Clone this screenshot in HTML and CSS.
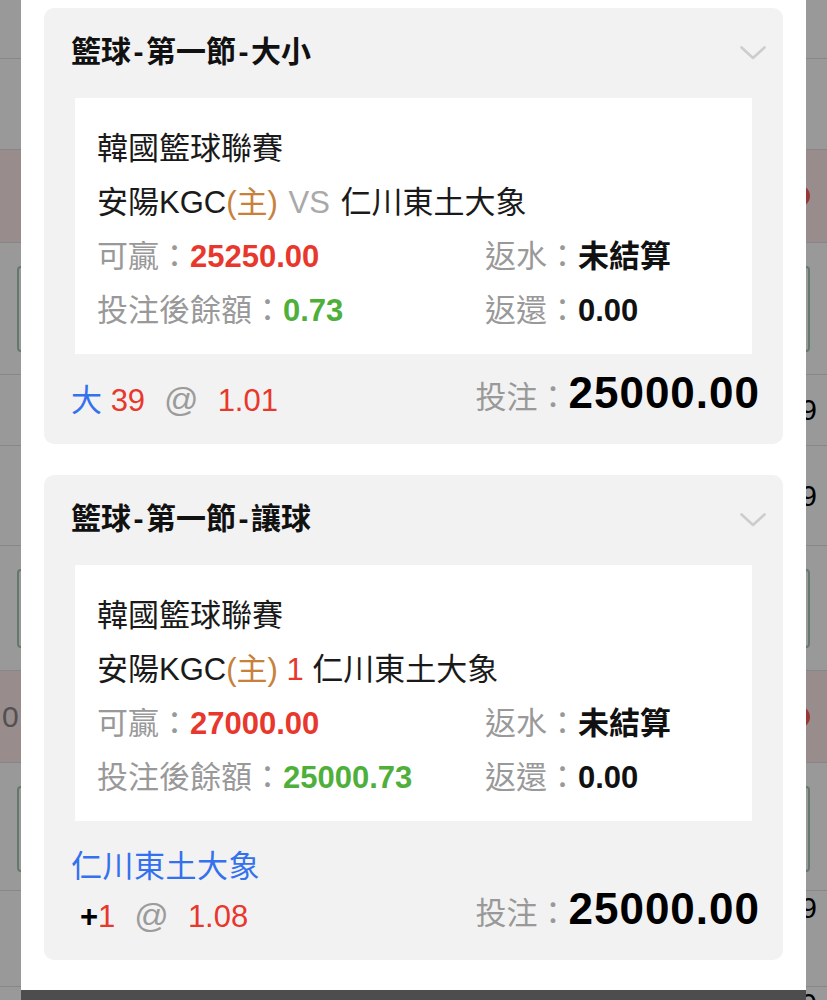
FILE: index.html
```html
<!DOCTYPE html>
<html lang="zh-Hant">
<head>
<meta charset="utf-8">
<title>注單</title>
<link rel="stylesheet" href="styles.css">
</head>
<body>
<div class="page">
  <div class="row h59"></div>
  <div class="row h91"></div>
  <div class="row h93 pink"><span></span><i class="dot"></i></div>
  <div class="row boxed h132"><div class="gbox tall"></div></div>
  <div class="row h71"><span></span><span class="num">9</span></div>
  <div class="row h100"><span></span><span class="num">9</span></div>
  <div class="row boxed h125"><div class="gbox short"></div></div>
  <div class="row h92 pink"><span class="zero">0</span><i class="dot"></i></div>
  <div class="row boxed h128"><div class="gbox tall"></div></div>
  <div class="row top h96"><span></span><span class="num">9</span></div>
  <div class="row top h60"><span></span><span class="num">9</span></div>
</div>

<div class="overlay"></div>

<div class="modal">
  <div class="modal-body">
    <section class="card">
      <header class="card-head">
        <h2>籃球<span class="dash">-</span>第一節<span class="dash">-</span>大小</h2>
        <svg class="chev" width="26" height="14" viewBox="0 0 26 14"><polyline points="1.5,1.5 13,12 24.5,1.5" fill="none" stroke="#cdcdcd" stroke-width="2.6" stroke-linecap="round" stroke-linejoin="round"/></svg>
      </header>
      <div class="detail">
        <div class="line">韓國籃球聯賽</div>
        <div class="line">安陽KGC<span class="home">(主)</span> <span class="vs">VS</span> 仁川東土大象</div>
        <div class="stats">
          <div><span class="lbl">可贏：</span><b class="red">25250.00</b></div>
          <div><span class="lbl">返水：</span><b>未結算</b></div>
          <div><span class="lbl">投注後餘額：</span><b class="green">0.73</b></div>
          <div><span class="lbl">返還：</span><b>0.00</b></div>
        </div>
      </div>
      <div class="card-foot">
        <div class="pick">
          <div class="pick-line"><span class="blue">大</span> <span class="red">39</span><span class="at">@</span><span class="red">1.01</span></div>
        </div>
        <div class="stake"><span class="lbl">投注：</span><b>25000.00</b></div>
      </div>
    </section>

    <section class="card">
      <header class="card-head">
        <h2>籃球<span class="dash">-</span>第一節<span class="dash">-</span>讓球</h2>
        <svg class="chev" width="26" height="14" viewBox="0 0 26 14"><polyline points="1.5,1.5 13,12 24.5,1.5" fill="none" stroke="#cdcdcd" stroke-width="2.6" stroke-linecap="round" stroke-linejoin="round"/></svg>
      </header>
      <div class="detail">
        <div class="line">韓國籃球聯賽</div>
        <div class="line">安陽KGC<span class="home">(主)</span> <span class="red">1</span> 仁川東土大象</div>
        <div class="stats">
          <div><span class="lbl">可贏：</span><b class="red">27000.00</b></div>
          <div><span class="lbl">返水：</span><b>未結算</b></div>
          <div><span class="lbl">投注後餘額：</span><b class="green">25000.73</b></div>
          <div><span class="lbl">返還：</span><b>0.00</b></div>
        </div>
      </div>
      <div class="card-foot">
        <div class="pick">
          <div class="pick-line team">仁川東土大象</div>
          <div class="pick-line"><b class="plus">+</b><span class="red">1</span><span class="at">@</span><span class="red">1.08</span></div>
        </div>
        <div class="stake"><span class="lbl">投注：</span><b>25000.00</b></div>
      </div>
    </section>
  </div>
  <div class="modal-bar"></div>
</div>
</body>
</html>
```

FILE: styles.css
```css
* { box-sizing: border-box; }

html, body {
  margin: 0;
  padding: 0;
  height: 1000px;
  overflow: hidden;
}

body {
  position: relative;
  width: 827px;
  background: #fff;
  color: #111;
  font-family: "Liberation Sans", "Noto Sans CJK TC", sans-serif;
}

/* ---------- underlying page ---------- */
.page { width: 827px; }

.row {
  display: flex;
  align-items: center;
  justify-content: space-between;
  border-bottom: 1px solid #e2e2e2;
  padding: 0 10px 0 2px;
  font-size: 30px;
  color: #000;
}
.row.top { align-items: flex-start; line-height: 34px; }
.row.pink { background: #ffe9e9; }
.row.boxed { display: block; padding: 23px 0 0 17px; }

.h59 { height: 59px; }
.h91 { height: 91px; }
.h93 { height: 93px; }
.h132 { height: 132px; }
.h71 { height: 71px; }
.h100 { height: 100px; }
.h125 { height: 125px; }
.h92 { height: 92px; }
.h128 { height: 128px; }
.h96 { height: 96px; }
.h60 { height: 60px; }

.gbox {
  width: 793px;
  border: 2px solid #a6cbb3;
  border-radius: 4px;
}
.gbox.tall { height: 86px; }
.gbox.short { height: 79px; }

.dot {
  width: 22px;
  height: 22px;
  border-radius: 50%;
  background: #ff5c5c;
  margin-right: 7px;
}
.zero { color: #888; }

.overlay {
  position: fixed;
  inset: 0;
  background: rgba(0, 0, 0, 0.4);
}

/* ---------- modal ---------- */
.modal {
  position: absolute;
  top: 0;
  left: 21px;
  width: 785px;
  background: #fff;
}

.modal-body {
  padding: 8px 23px 30px;
  display: flex;
  flex-direction: column;
  gap: 31px;
}

.modal-bar {
  height: 60px;
  background: #4d4d4d;
}

.card {
  background: #f2f2f2;
  border-radius: 10px;
}

.card-head {
  height: 90px;
  display: flex;
  align-items: center;
  justify-content: space-between;
  padding: 0 17px 0 27px;
}

.card-head h2 {
  margin: 0 0 2px;
  font-size: 30px;
  line-height: 30px;
  font-weight: bold;
  color: #111;
}
.dash { padding: 0 2.5px; }

.chev { display: block; }

.detail {
  margin: 0 31px;
  background: #fff;
  padding: 24px 22px 16px;
  font-size: 31px;
  line-height: 54px;
  color: #1a1a1a;
}

.line { height: 54px; white-space: nowrap; }

.home { color: #c8813b; }
.vs { color: #a9a9a9; margin: 0 2px; }

.stats {
  display: grid;
  grid-template-columns: 388px 1fr;
  grid-auto-rows: 54px;
  white-space: nowrap;
}
.stats b { color: #111; }

.lbl { color: #999; }

.red { color: #e8382d; }
.stats b.red { color: #e8382d; }
.stats b.green { color: #4faf3b; }
.blue { color: #3471ee; }

.card-foot {
  display: flex;
  justify-content: space-between;
  align-items: flex-end;
  padding: 21px 23px 20px 27px;
  font-size: 31px;
}

.pick-line {
  line-height: 49px;
  height: 49px;
  white-space: nowrap;
  color: #111;
}
.pick-line.team { color: #3471ee; letter-spacing: 0.5px; }

.plus { margin-left: 9px; color: #000; }

.at {
  color: #9b9b9b;
  font-size: 34px;
  margin: 0 19px 0 19px;
}

.stake {
  line-height: 35px;
  margin-bottom: 9px;
  white-space: nowrap;
}
.stake b {
  font-size: 44px;
  letter-spacing: 1px;
  color: #000;
}
```
